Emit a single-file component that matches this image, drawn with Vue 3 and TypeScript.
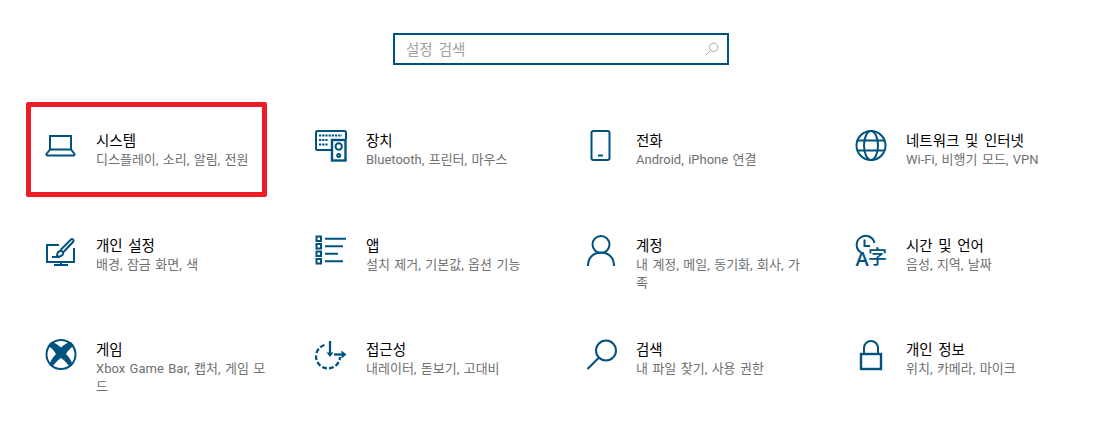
<script setup lang="ts">
interface Item { key: string; title: string; sub: string }
const items: Item[] = [
  { key: 'system', title: '시스템', sub: '디스플레이, 소리, 알림, 전원' },
  { key: 'devices', title: '장치', sub: 'Bluetooth, 프린터, 마우스' },
  { key: 'phone', title: '전화', sub: 'Android, iPhone 연결' },
  { key: 'network', title: '네트워크 및 인터넷', sub: 'Wi-Fi, 비행기 모드, VPN' },
  { key: 'personal', title: '개인 설정', sub: '배경, 잠금 화면, 색' },
  { key: 'apps', title: '앱', sub: '설치 제거, 기본값, 옵션 기능' },
  { key: 'account', title: '계정', sub: '내 계정, 메일, 동기화, 회사, 가족' },
  { key: 'time', title: '시간 및 언어', sub: '음성, 지역, 날짜' },
  { key: 'game', title: '게임', sub: 'Xbox Game Bar, 캡처, 게임 모드' },
  { key: 'access', title: '접근성', sub: '내레이터, 돋보기, 고대비' },
  { key: 'search', title: '검색', sub: '내 파일 찾기, 사용 권한' },
  { key: 'privacy', title: '개인 정보', sub: '위치, 카메라, 마이크' }
]
</script>

<template>
  <div class="page">
    <div class="search">
      <span class="placeholder">설정 검색</span>
      <svg class="search-icon" width="14" height="14" viewBox="0 0 14 14" fill="none" stroke="#a8a8a8" stroke-width="1">
        <circle cx="8.7" cy="5.3" r="4.2" />
        <path d="M5.7 8.3 0.8 13.2" />
      </svg>
    </div>
    <div class="grid">
      <div v-for="it in items" :key="it.key" class="item">
        <svg class="icon" width="32" height="32" viewBox="0 0 32 32" fill="none" stroke="#00527f" stroke-width="2">
          <g v-if="it.key === 'system'">
            <path d="M5 19.500V6h21v13.500" />
            <path d="M5 19.500 1.500 24a1 1 0 0 0 1 1.500h26a1 1 0 0 0 1-1.500L26 19.500Z" />
          </g>
          <g v-else-if="it.key === 'devices'">
            <path d="M16 20H2.500A1.500 1.500 0 0 1 1 18.500V2.500A1.500 1.500 0 0 1 2.500 1h27A1.500 1.500 0 0 1 31 2.500V9" />
            <path d="M4 5.500h23M4 10h9M4 14.500h9" stroke-dasharray="2.200 1" stroke-width="2.200" />
            <rect x="17" y="10" width="13.500" height="20.500" stroke-width="2.400" />
            <circle cx="23.700" cy="16.500" r="3.200" />
            <circle cx="23.700" cy="25.500" r="1.500" />
          </g>
          <g v-else-if="it.key === 'phone'">
            <rect x="6.500" y="1" width="18" height="29" rx="2" />
            <path d="M13 25.500h5" />
          </g>
          <g v-else-if="it.key === 'network'">
            <circle cx="16" cy="15.500" r="14.500" />
            <ellipse cx="16" cy="15.500" rx="7" ry="14.500" />
            <path d="M3 10.500h26M3 20.500h26" />
          </g>
          <g v-else-if="it.key === 'personal'">
            <path d="M14 10H2v17h27V13" />
            <path d="M16 27v3M9 30h14" />
            <path d="M7 22h8" />
            <path d="M12 21.500c0-3 .8-5 3-5.500 2-.3 3.500 1 3 3-.7 2-3 2.500-6 2.500Z" />
            <path d="M15.500 15 26 4.500c1.500-1.200 3.500.8 2.200 2.300L18.500 17" />
          </g>
          <g v-else-if="it.key === 'apps'">
            <rect x="1.500" y="1.500" width="4.500" height="4.500" />
            <rect x="1.500" y="9" width="4.500" height="4.500" />
            <rect x="1.500" y="16.500" width="4.500" height="4.500" />
            <rect x="1.500" y="24" width="4.500" height="4.500" />
            <path d="M10 3.800h21M10 11.300h18M10 18.800h13M10 26.300h18" />
          </g>
          <g v-else-if="it.key === 'account'">
            <circle cx="16" cy="9.500" r="8.500" />
            <path d="M3 31c0-8 5-13.500 13-13.500S29 23 29 31" />
          </g>
          <g v-else-if="it.key === 'time'">
            <path d="M6 17.500A9 9 0 1 1 19.500 8" />
            <path d="M9.500 4.500v6.500h5.500" />
            <text x="0.500" y="31" class="glyph-a">A</text>
            <text x="13" y="28.500" class="glyph-z">字</text>
          </g>
          <g v-else-if="it.key === 'game'">
            <circle cx="16" cy="15.500" r="14.500" />
            <path fill="#00527f" stroke="none" d="M6 3C9 3 13 5.500 16 8.500 19 5.500 23 3 26 3L29 6.500C26 8.500 23 11.500 21 15 24.500 18.500 27 22.500 27.500 26L25 28C22.500 24.500 19 21 16 19 13 21 9.500 24.500 7 28L4.500 26C5 22.500 7.500 18.500 11 15 9 11.500 6 8.500 3 6.500Z" />
          </g>
          <g v-else-if="it.key === 'access'">
            <path d="M9.500 6A12 12 0 1 0 25 18" stroke-dasharray="4.800 2.200" stroke-width="2.300" />
            <path d="M15 2v14" stroke-width="2.300" />
            <path fill="#00527f" stroke="none" d="M11.500 13.500h7L15 18Z" />
            <path d="M19 15.500h9" stroke-width="2.300" />
            <path fill="#00527f" stroke="none" d="M26.500 11.500 31.500 15.500 26.500 19.500Z" />
          </g>
          <g v-else-if="it.key === 'search'">
            <circle cx="21" cy="11.500" r="10" />
            <path d="M14 18.500 2.500 30" stroke-width="2.200" />
          </g>
          <g v-else>
            <path d="M9 15V9a7 7 0 0 1 14 0v6" />
            <rect x="6" y="15" width="20" height="15" stroke-width="2.400" />
          </g>
        </svg>
        <div class="text">
          <div class="title">{{ it.title }}</div>
          <div class="sub">{{ it.sub }}</div>
        </div>
      </div>
    </div>
    <div class="highlight"></div>
  </div>
</template>

<style>
body { background: #fff; }
</style>

<style scoped>
.page {
  position: relative;
  width: 1113px;
  height: 428px;
  overflow: hidden;
  background: #fff;
  font-family: Roboto, "Noto Sans CJK KR", sans-serif;
}
.search {
  box-sizing: border-box;
  width: 336px;
  height: 32px;
  margin: 33px auto 0 393px;
  border: 2px solid #00527f;
  padding: 0 8px 0 11px;
  display: flex;
  align-items: center;
  justify-content: space-between;
}
.placeholder { font-size: 14.500px; word-spacing: 2.500px; color: #a0a0a0; margin-top: -2px; }
.grid {
  display: grid;
  grid-template-columns: repeat(4, 270px);
  grid-auto-rows: 104.500px;
  margin: 63px 0 0 45px;
}
.item { display: flex; align-items: flex-start; }
.icon { flex: none; margin-top: 2px; margin-right: 19px; overflow: visible; }
.glyph-a {
  font-family: "Open Sans", sans-serif;
  font-size: 20px;
  font-weight: 600;
  fill: #00527f;
  stroke: none;
}
.glyph-z {
  font-family: "Noto Sans CJK SC", sans-serif;
  font-size: 19px;
  font-weight: 500;
  fill: #00527f;
  stroke: none;
}
.text { width: 172px; word-break: break-all; padding-top: 4px; }
.title { font-size: 14.500px; line-height: 19px; word-spacing: 2px; color: #000; }
.sub { font-size: 13px; line-height: 18px; word-spacing: 1.200px; color: #707070; }
.highlight {
  position: absolute;
  left: 26px;
  top: 102px;
  width: 241px;
  height: 95px;
  box-sizing: border-box;
  border: 5px solid #ed1c24;
  border-radius: 2px;
}
</style>
